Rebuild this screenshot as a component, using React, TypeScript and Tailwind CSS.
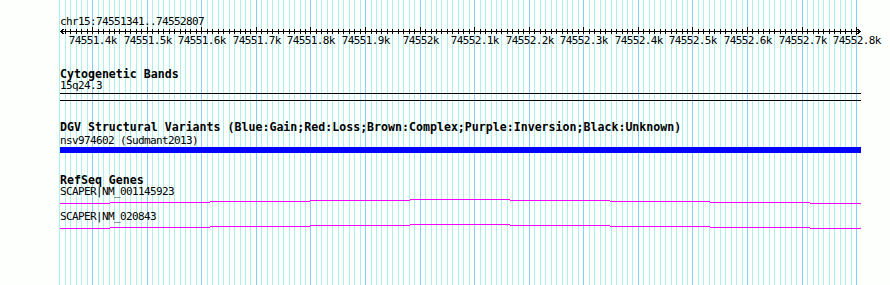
const START = 74551341;
const END = 74552807;
const LEFT = 60;
const WIDTH = 800;

const px = (pos: number) => Math.round(LEFT + ((pos - START) * WIDTH) / (END - START));

const ticks: number[] = [];
for (let p = Math.ceil((START - 1) / 10) * 10; p <= END; p += 10) ticks.push(p);

const label = (p: number) => `${(p / 1000).toFixed(1).replace(/\.0$/, '')}k`;

const mono = "font-['DejaVu_Sans_Mono',monospace]";
const small = 'text-[11px] leading-[11px] tracking-[-0.62px]';
const bold = 'text-[11.6px] leading-[12px] font-bold';

// intron line drawn as a shallow hat, stepping 1px every 100px
const steps = [
  [60, 110, 4],
  [110, 210, 3],
  [210, 310, 2],
  [310, 410, 1],
  [410, 510, 0],
  [510, 610, 1],
  [610, 710, 2],
  [710, 810, 3],
  [810, 861, 4],
];

function Grid() {
  return (
    <svg className="absolute inset-0" width={890} height={285} shapeRendering="crispEdges">
      {ticks.map((p) => (
        <rect
          key={p}
          x={px(p)}
          y={0}
          width={1}
          height={285}
          fill={p % 100 === 0 ? '#87cefa' : '#afeeee'}
        />
      ))}
    </svg>
  );
}

function Ruler() {
  return (
    <svg className="block" width={890} height={21} shapeRendering="crispEdges">
      <rect x={60} y={4} width={801} height={1} fill="#000" />
      <path d="M60.5 4.5 L64.5 1.5 M60.5 4.5 L64.5 7.5" stroke="#000" fill="none" />
      <path d="M860.5 4.5 L856.5 1.5 M860.5 4.5 L856.5 7.5" stroke="#000" fill="none" />
      {ticks
        .filter((p) => p >= START)
        .map((p) => (
          <rect key={p} x={px(p)} y={p % 100 === 0 ? 0 : 2} width={1} height={p % 100 === 0 ? 7 : 5} fill="#000" />
        ))}
      {ticks
        .filter((p) => p % 100 === 0)
        .map((p) => (
          <text
            key={p}
            x={px(p) + 0.8}
            y={17}
            textAnchor="middle"
            fontFamily="'DejaVu Sans Mono', monospace"
            fontSize={11}
            letterSpacing={-0.62}
            fill="#000"
          >
            {label(p)}
          </text>
        ))}
    </svg>
  );
}

function Transcript() {
  return (
    <svg className="block" width={890} height={8} shapeRendering="crispEdges">
      {steps.map(([a, b, y]) => (
        <rect key={a} x={a} y={y + 2} width={b - a} height={1} fill="#ff00ff" />
      ))}
    </svg>
  );
}

export default function App() {
  return (
    <div className={`relative w-[890px] h-[285px] overflow-hidden bg-[#fcfffc] text-black ${mono}`}>
      <Grid />
      <div className="relative flex flex-col">
        <div className={`mt-[16px] h-[11px] pl-[60px] ${small}`}>chr15:74551341..74552807</div>
        <Ruler />

        {/* Cytogenetic Bands */}
        <div className={`mt-[20px] h-[12px] pl-[60px] ${bold}`}>Cytogenetic Bands</div>
        <div className={`h-[11px] pl-[60px] ${small}`}>15q24.3</div>
        <div className="mt-[2px] ml-[60px] h-px w-[801px] bg-black" />
        <div className="mt-[6px] ml-[60px] h-px w-[801px] bg-black" />

        {/* DGV */}
        <div className={`mt-[20px] h-[12px] pl-[60px] whitespace-nowrap ${bold}`}>
          DGV Structural Variants (Blue:Gain;Red:Loss;Brown:Complex;Purple:Inversion;Black:Unknown)
        </div>
        <div className={`mt-[2px] h-[11px] pl-[60px] ${small}`}>nsv974602 (Sudmant2013)</div>
        <div className="mt-[1px] ml-[60px] h-[6px] w-[801px] bg-[#0000ff]" />

        {/* RefSeq */}
        <div className={`mt-[21px] h-[12px] pl-[60px] ${bold}`}>RefSeq Genes</div>
        <div className={`h-[11px] pl-[60px] ${small}`}>SCAPER|NM_001145923</div>
        <Transcript />
        <div className={`mt-[6px] h-[11px] pl-[60px] ${small}`}>SCAPER|NM_020843</div>
        <Transcript />
      </div>
    </div>
  );
}
